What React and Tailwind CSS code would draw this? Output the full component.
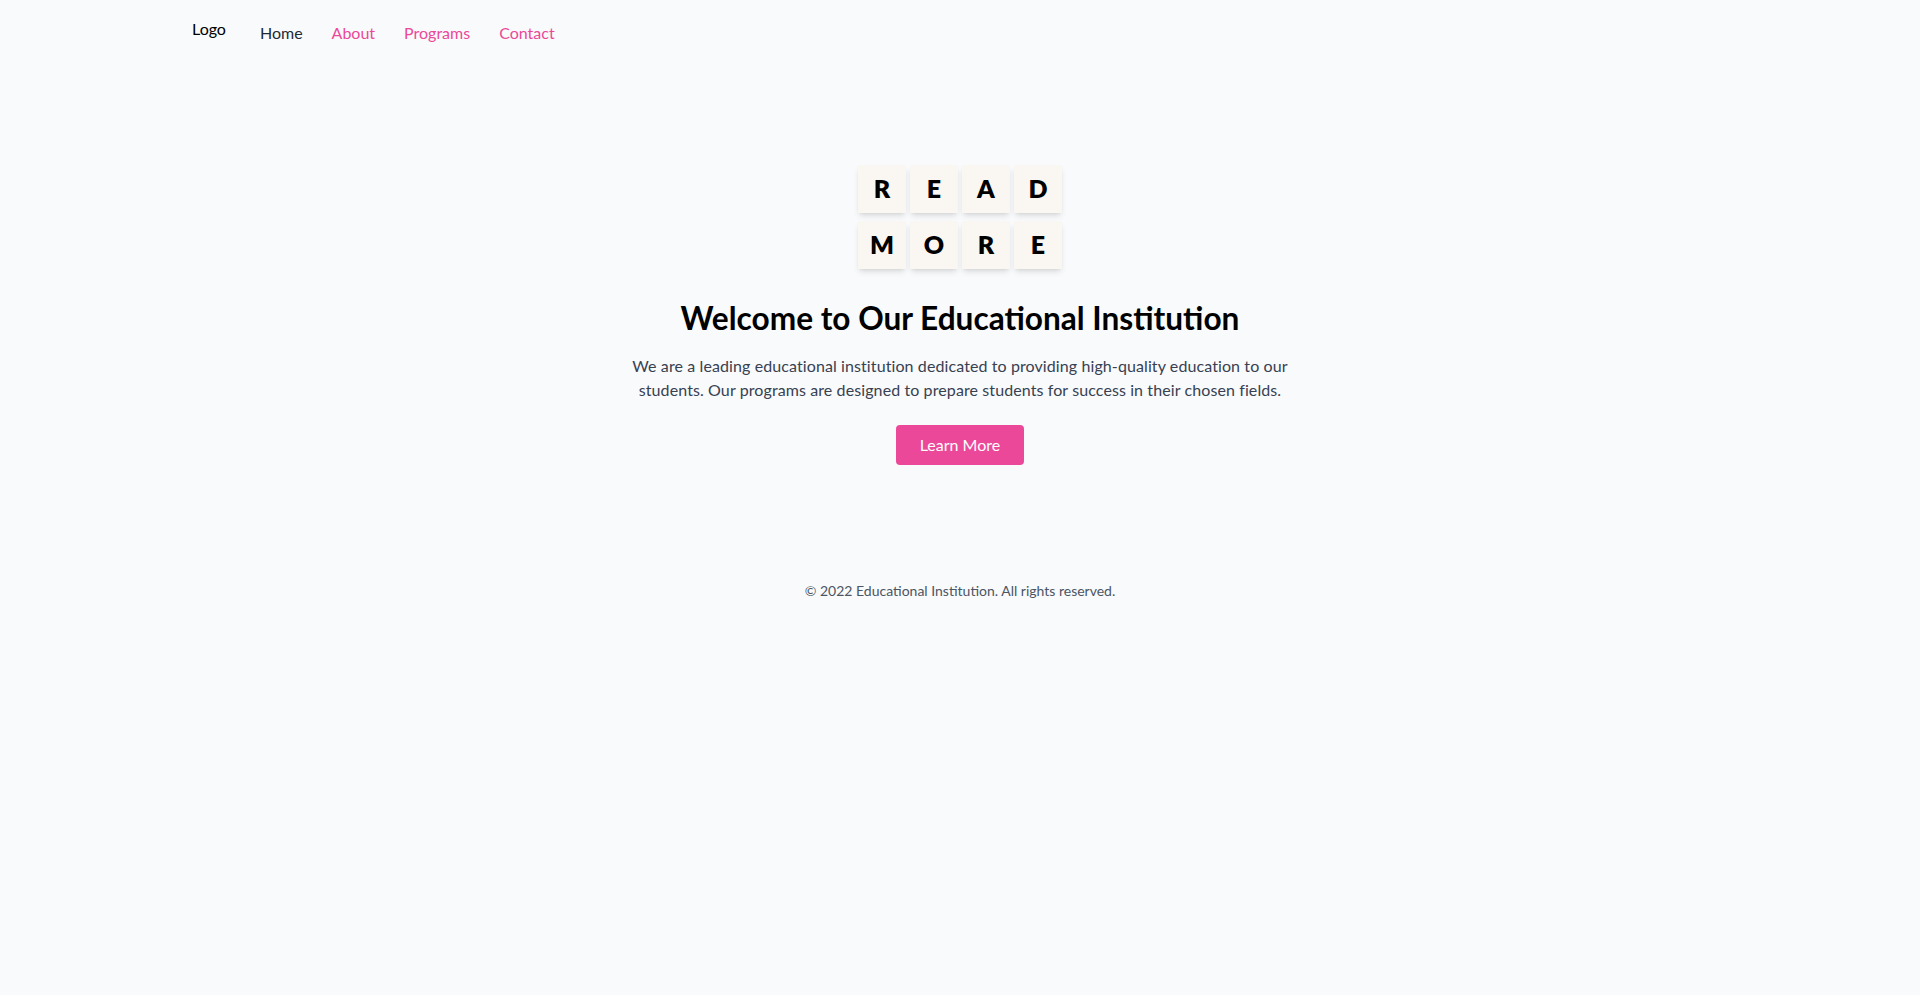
import React from "react";

const letters = ["R", "E", "A", "D", "M", "O", "R", "E"];

const App = () => {
  return (
    <div className="min-h-screen bg-[#f9fafb] font-['Lato',sans-serif]">
      {/* Navbar */}
      <header className="container mx-auto flex items-start pt-[17px]">
        <div className="text-base leading-6 text-black">Logo</div>
        <nav className="ml-[34px] mt-1 flex gap-[29px] text-base leading-6">
          <a href="#" className="text-[#1f2937]">Home</a>
          <a href="#" className="text-[#ec4899]">About</a>
          <a href="#" className="text-[#ec4899]">Programs</a>
          <a href="#" className="text-[#ec4899]">Contact</a>
        </nav>
      </header>

      {/* Hero */}
      <main className="flex flex-col items-center pt-[120px] text-center">
        <div className="grid grid-cols-4 gap-x-1 gap-y-2">
          {letters.map((letter, i) => (
            <div
              key={i}
              className="flex h-12 w-12 items-center justify-center bg-[#faf7f2] text-[25px] font-extrabold text-black shadow-md"
            >
              {letter}
            </div>
          ))}
        </div>

        <h1 className="mt-[31px] text-[31.6px] leading-9 font-bold text-black">
          Welcome to Our Educational Institution
        </h1>
        <p className="mt-[18px] max-w-2xl text-base leading-6 tracking-[0.1px] text-[#374151]">
          We are a leading educational institution dedicated to providing
          high-quality education to our students. Our programs are designed to
          prepare students for success in their chosen fields.
        </p>
        <button className="mt-[23px] rounded bg-[#ec4899] px-6 py-2 text-base leading-6 text-white">
          Learn More
        </button>
      </main>

      {/* Footer */}
      <footer className="mt-[116px] text-center text-sm leading-5 text-[#4b5563]">
        © 2022 Educational Institution. All rights reserved.
      </footer>
    </div>
  );
};

export default App;
